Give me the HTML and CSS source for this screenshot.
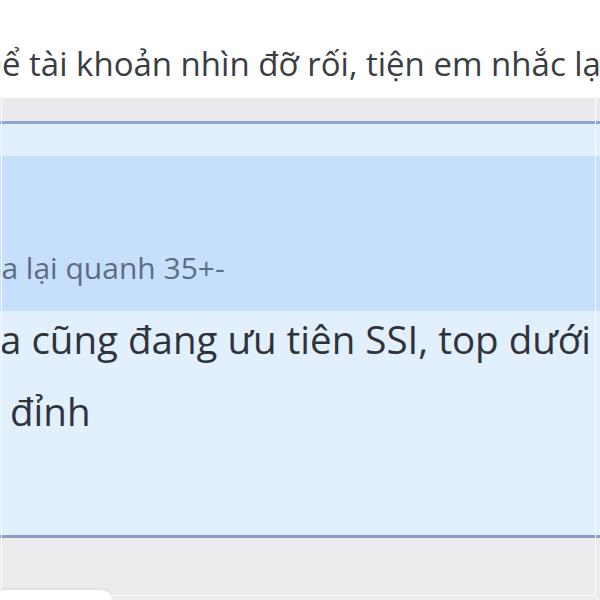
FILE: index.html
```html
<!DOCTYPE html>
<html lang="vi">

<head>
    <meta charset="UTF-8" />
    <meta name="viewport" content="width=device-width, initial-scale=1.0" />
    <title>Tin nhắn</title>
    <link rel="stylesheet" href="styles.css">
</head>

<body>

    <div class="message">
        <p class="message-text">Để tài khoản nhìn đỡ rối, tiện em nhắc lại</p>
    </div>

    <div class="thread">
        <div class="reply">
            <div class="quote">
                <p class="quote-text">ha lại quanh 35+-</p>
            </div>
            <p class="reply-text">a cũng đang ưu tiên SSI, top dưới<br>&nbsp;đỉnh</p>
        </div>
        <div class="composer">
            <div class="composer-box"></div>
        </div>
    </div>

</body>

</html>
```

FILE: styles.css
```css
* {
    box-sizing: border-box;
    margin: 0;
    padding: 0;
}

html,
body {
    height: 100%;
    overflow: hidden;
    font-family: "Open Sans", "Noto Sans", sans-serif;
    background: #fff;
}

.message {
    height: 98px;
    padding-top: 42px;
    overflow: hidden;
}

.message-text {
    margin-left: -22px;
    font-size: 33px;
    line-height: 44px;
    color: #3a3d44;
    white-space: nowrap;
}

.thread {
    position: relative;
    height: 502px;
    display: flex;
    flex-direction: column;
    background: linear-gradient(#eaeaec, #ececef);
    padding-top: 23px;
}

/* thin white frame drawn over the panel edges */
.thread::after {
    content: "";
    position: absolute;
    top: 0;
    left: 1px;
    right: 4px;
    bottom: 4px;
    border: 1px solid rgba(255, 255, 255, 0.85);
    border-top: none;
    pointer-events: none;
}

.reply {
    background: #e2effd;
    border-top: 3px solid #8ca5d2;
    border-bottom: 3px solid #8e9dc6;
    padding-top: 32px;
    height: 417px;
}

.quote {
    background: #c6dffb;
    height: 155px;
    display: flex;
    align-items: flex-end;
    padding-bottom: 25px;
    overflow: hidden;
}

.quote-text {
    margin-left: -17px;
    font-size: 30px;
    line-height: 36px;
    color: #5c6c84;
    white-space: nowrap;
}

.reply-text {
    padding-top: 0;
    margin-top: -8px;
    font-size: 38.5px;
    line-height: 72px;
    color: #2f333b;
    white-space: nowrap;
}

.composer {
    flex: 1;
    display: flex;
    align-items: flex-end;
}

.composer-box {
    width: 112px;
    height: 12px;
    margin-bottom: -2px;
    background: #fff;
    border-top-right-radius: 10px;
    box-shadow: 0 -1px 3px rgba(0, 0, 0, 0.08);
}
```
